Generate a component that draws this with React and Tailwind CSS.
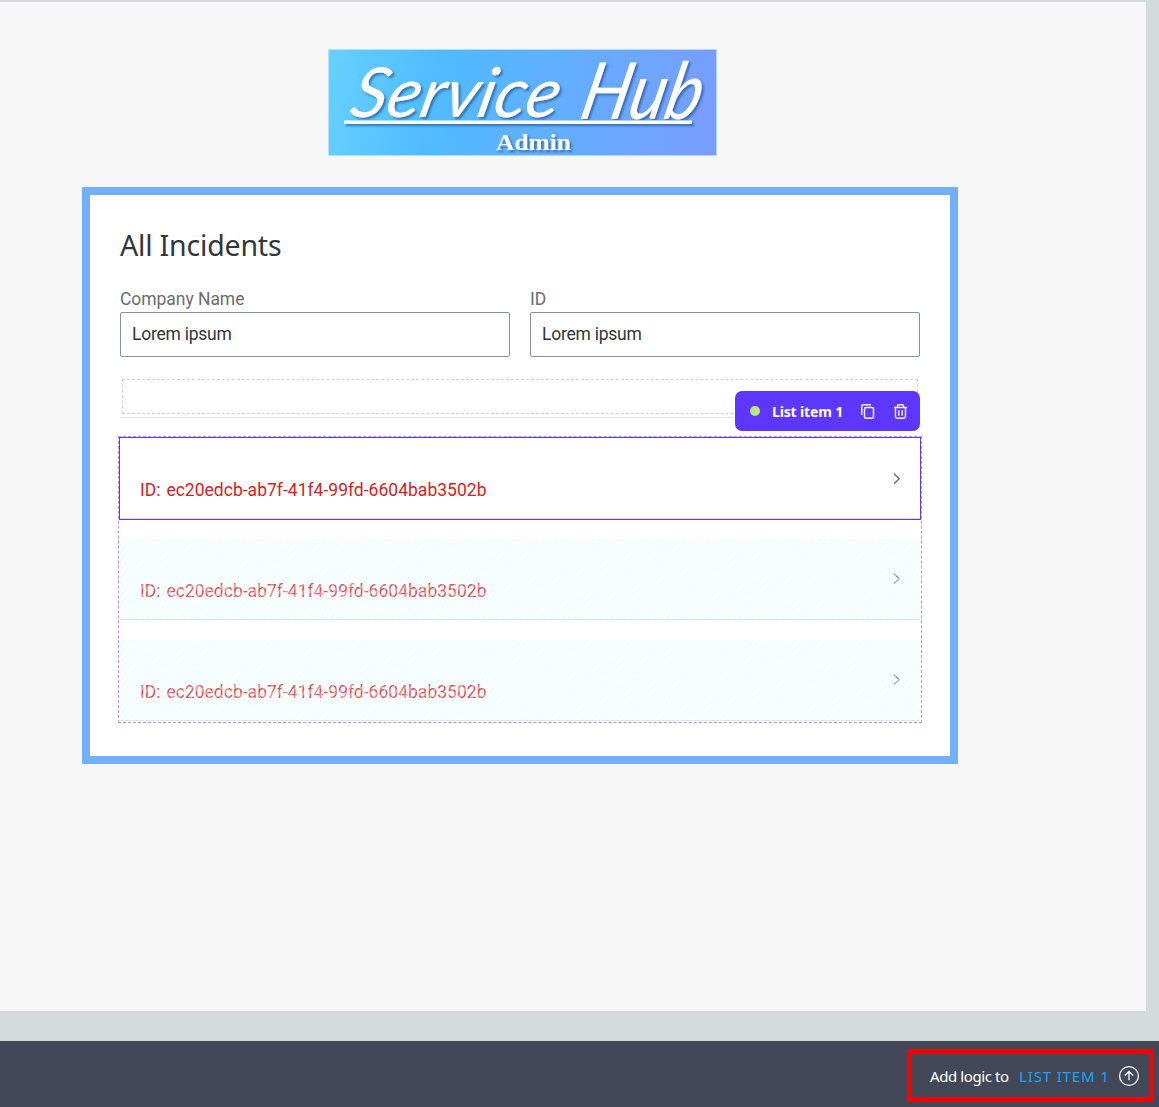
import React from "react";

const incidentId = "ID: ec20edcb-ab7f-41f4-99fd-6604bab3502b";

function Logo() {
  return (
    <svg className="ml-[328px] block h-[107px] w-[389px] overflow-visible" viewBox="0 0 389 107">
      <defs>
        <linearGradient id="sky" gradientUnits="userSpaceOnUse" x1="0" y1="30" x2="382" y2="96">
          <stop offset="0" stopColor="#66d0ff" />
          <stop offset="0.27" stopColor="#50bcff" />
          <stop offset="1" stopColor="#789dff" />
        </linearGradient>
        <filter id="lift" x="-10%" y="-20%" width="120%" height="150%">
          <feDropShadow dx="2" dy="2" stdDeviation="1.2" floodColor="#1f4f8c" floodOpacity="0.65" />
        </filter>
      </defs>
      <rect x="0.5" y="0.5" width="388" height="106" fill="url(#sky)" stroke="#b9dcff" strokeOpacity="0.6" />
      <g fill="#fff" filter="url(#lift)">
        <g transform="translate(0 68) skewX(-13)">
          <text x="20" y="0" fontFamily="Lato, sans-serif" fontStyle="italic" fontSize="69" textLength="208" lengthAdjust="spacingAndGlyphs">Service</text>
          <text x="250" y="2" fontFamily="Lato, sans-serif" fontStyle="italic" fontSize="79" textLength="120" lengthAdjust="spacingAndGlyphs">Hub</text>
        </g>
        <rect x="16" y="71.5" width="348" height="3.5" />
        <text x="168" y="101" fontFamily="Liberation Serif, serif" fontWeight="bold" fontSize="24" textLength="75" lengthAdjust="spacingAndGlyphs">Admin</text>
      </g>
    </svg>
  );
}

function Field({ label }) {
  return (
    <label className="block w-[390px] font-['Roboto',sans-serif] text-[17.5px]">
      <span className="block h-[26px] leading-[26px] tracking-[-0.05px] text-[#6a6d70]">{label}</span>
      <span className="block h-[45px] rounded-[2px] border border-[#89919a] pl-[11px] leading-[43px] tracking-[-0.25px] text-[#32363a]">
        Lorem ipsum
      </span>
    </label>
  );
}

function Chevron() {
  return (
    <svg className="h-3 w-2" viewBox="0 0 8 12" fill="none" stroke="#6a6d70" strokeWidth="1.4">
      <path d="M1 .8 6.2 5.8 1 10.8" />
    </svg>
  );
}

function ListItem({ selected }) {
  return (
    <div
      className={
        selected
          ? "relative mb-[19px] flex h-[83px] items-center justify-between border border-[#5d36ff] pr-[19px] pl-5 shadow-[inset_0_-1px_0_#e0e0d8]"
          : "relative mx-px mb-5 flex h-[81px] items-center justify-between border-b border-[#e2e5e6] bg-[#f3fcff] pr-[19px] pl-5 last:mb-0"
      }
    >
      <span className="mt-[23px] font-['Roboto',sans-serif] text-[17.5px] leading-5 tracking-[0.015px] [word-spacing:1.5px] text-[#d9201f]">
        {incidentId}
      </span>
      <Chevron />
      {!selected && (
        <div className="absolute inset-0 bg-[repeating-linear-gradient(125deg,rgba(255,255,255,0.5)_0px,rgba(255,255,255,0.5)_1.6px,rgba(243,252,255,0.2)_2.6px,rgba(243,252,255,0.2)_4.2px,rgba(255,255,255,0.5)_5px)]" />
      )}
    </div>
  );
}

function Toolbar() {
  return (
    <div className="absolute top-[12px] right-0 flex h-10 w-[185px] items-center rounded-[7px] bg-[#5d36ff] pl-[15px] text-white">
      <span className="h-2.5 w-2.5 rounded-full bg-[#b9e87a]" />
      <span className="ml-3 w-[71px] font-['Noto_Sans',sans-serif] text-[14px] font-bold tracking-[-0.15px] whitespace-nowrap">List item 1</span>
      <svg className="ml-[18px] h-[15px] w-[14px]" viewBox="0 0 14 15" fill="none" stroke="#f1eeff" strokeWidth="1.5">
        <rect x="3.5" y="3.5" width="9" height="10.8" rx="1.6" />
        <path d="M.75 11V2.3Q.75.75 2.3.75H10" />
      </svg>
      <svg className="ml-[19px] h-[15px] w-[13px]" viewBox="0 0 13 15" fill="none" stroke="#f1eeff" strokeWidth="1.4">
        <path d="M0 3.5h13M3.5 3.5V1.8Q3.5.7 4.6.7h3.8q1.1 0 1.1 1.1v1.7M1.5 3.5v9.1q0 1.7 1.7 1.7h6.6q1.7 0 1.7-1.7V3.5M4.8 6.2v5.5M8.2 6.2v5.5" />
      </svg>
    </div>
  );
}

export default function App() {
  return (
    <div className="flex h-[1107px] w-[1159px] flex-col overflow-hidden bg-[#d5dadd]">
      <main className="mt-0.5 h-[1009px] w-[1146px] bg-[#f7f7f7] pt-[47px]">
        <Logo />
        <section className="mt-[31px] ml-[82px] h-[577px] w-[876px] border-8 border-[#73afff] bg-white px-[30px] pt-[30px]">
          <h1 className="h-[61px] font-['Noto_Sans',sans-serif] text-[28.5px] leading-[41px] tracking-[-0.18px] text-[#32363a]">All Incidents</h1>
          <div className="flex gap-5">
            <Field label="Company Name" />
            <Field label="ID" />
          </div>
          <div className="relative mt-[22px] h-[39px] border-b border-[#e5e5e5] px-0.5">
            <div className="h-[35px] border border-dashed border-[#d0d0d0]" />
            <Toolbar />
          </div>
          <div className="-mx-0.5 mt-[18px] h-[287px] border border-dashed border-[#b58cff]">
            <ListItem selected />
            <ListItem />
            <ListItem />
          </div>
        </section>
      </main>
      <footer className="mt-[30px] flex h-[66px] justify-end bg-[#434859] pt-2 pr-[5px]">
        <div className="flex h-[53px] w-[247px] items-center border-5 border-[#ee0505] pl-[18px] font-['Noto_Sans',sans-serif] text-[15px] whitespace-nowrap">
          <span className="mt-px w-[89px] tracking-[-0.4px] text-white">Add logic to</span>
          <span className="mt-px w-[90px] tracking-[0.85px] text-[#13a4f5]">LIST ITEM 1</span>
          <svg className="ml-[9px] h-[22px] w-[22px]" viewBox="0 0 22 22" fill="none" stroke="#fff" strokeWidth="1.3">
            <circle cx="11" cy="11" r="9.4" />
            <path d="M11 15.3V7M6.8 10.5 11 6.5l4.2 4" />
          </svg>
        </div>
      </footer>
    </div>
  );
}
